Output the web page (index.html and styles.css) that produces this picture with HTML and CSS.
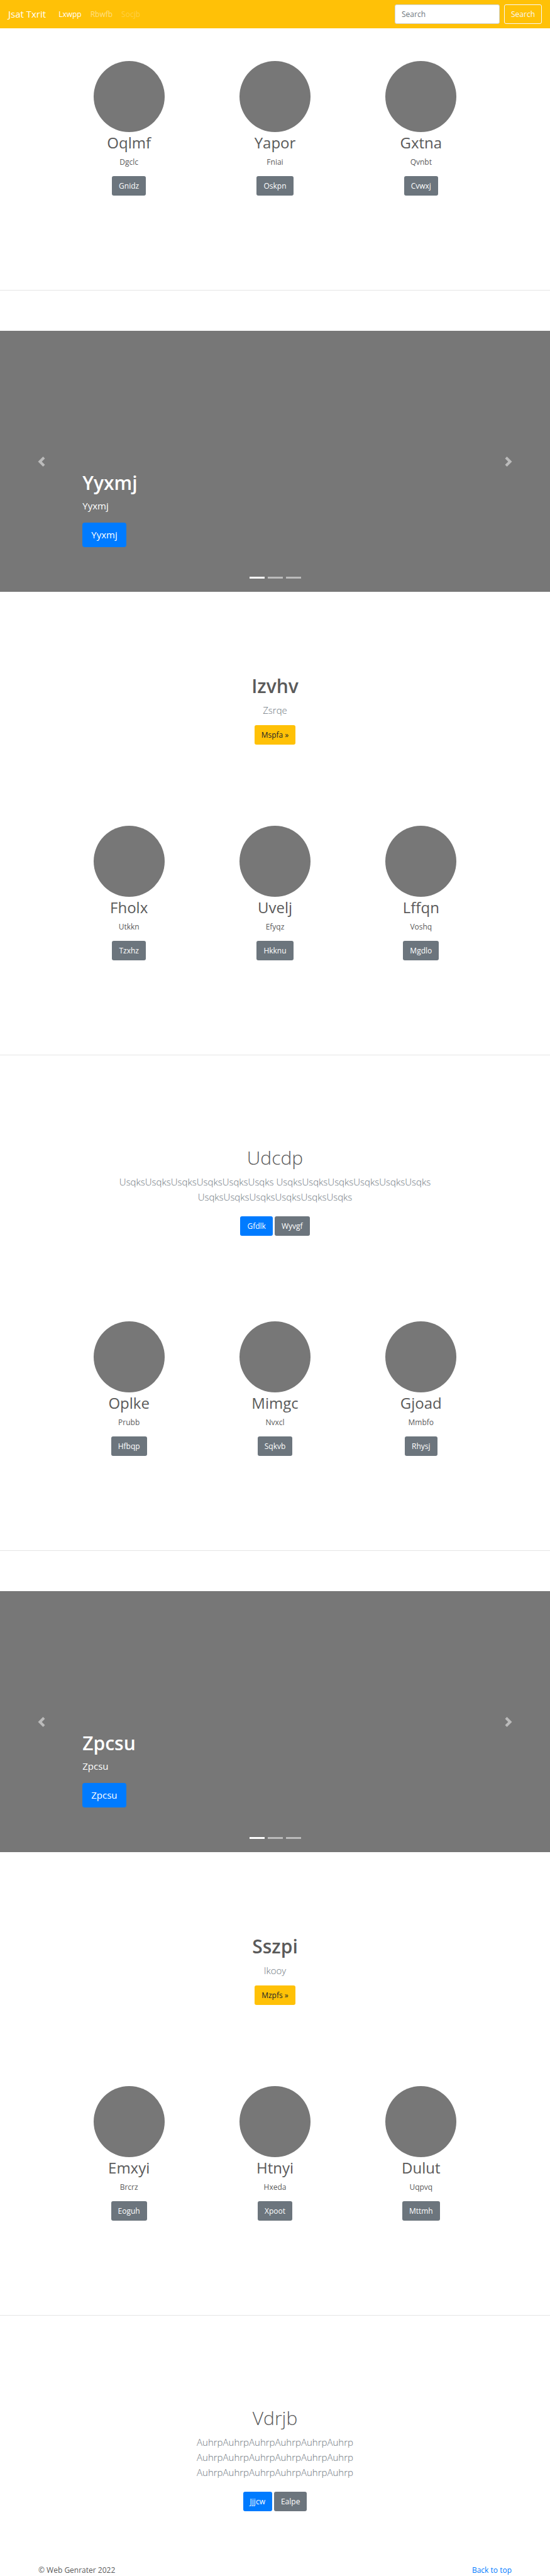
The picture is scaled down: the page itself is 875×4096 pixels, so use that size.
FILE: index.html
```html
<!DOCTYPE html>
<html lang="en">
<head>
<meta charset="utf-8">
<meta name="viewport" content="width=device-width, initial-scale=1">
<title>Jsat Txrit</title>
<link rel="stylesheet" href="styles.css">
</head>
<body id="top">
<header class="navbar">
  <a class="brand" href="#">Jsat Txrit</a>
  <nav class="nav-links">
    <a class="nav-link active" href="#">Lxwpp</a>
    <a class="nav-link" href="#">Rbwfb</a>
    <a class="nav-link disabled" href="#">Socjb</a>
  </nav>
  <form class="search">
    <input class="search-input" type="search" placeholder="Search" aria-label="Search">
    <button class="btn btn-outline" type="button">Search</button>
  </form>
</header>
<main>
  <section class="features">
    <article class="feature"><div class="avatar"></div><h2>Oqlmf</h2><p>Dgclc</p><a class="btn btn-secondary" href="#">Gnidz</a></article>
    <article class="feature"><div class="avatar"></div><h2>Yapor</h2><p>Fniai</p><a class="btn btn-secondary" href="#">Oskpn</a></article>
    <article class="feature"><div class="avatar"></div><h2>Gxtna</h2><p>Qvnbt</p><a class="btn btn-secondary" href="#">Cvwxj</a></article>
  </section>
  <hr class="divider">

  <section class="carousel">
    <button class="arrow arrow-prev" type="button" aria-label="Previous"><svg viewBox="0 0 8 8"><path d="M5.25 0l-4 4 4 4 1.5-1.5L4.25 4l2.5-2.5L5.25 0z"/></svg></button>
    <div class="caption">
      <h1>Yyxmj</h1>
      <p>Yyxmj</p>
      <a class="btn btn-primary btn-large" href="#">Yyxmj</a>
    </div>
    <button class="arrow arrow-next" type="button" aria-label="Next"><svg viewBox="0 0 8 8"><path d="M2.75 0l-1.5 1.5L3.75 4l-2.5 2.5L2.75 8l4-4-4-4z"/></svg></button>
    <div class="indicators"><span class="dash current"></span><span class="dash"></span><span class="dash"></span></div>
  </section>

  <section class="banner">
    <h1>Izvhv</h1>
    <p>Zsrqe</p>
    <a class="btn btn-warning" href="#">Mspfa »</a>
  </section>

  <section class="features">
    <article class="feature"><div class="avatar"></div><h2>Fholx</h2><p>Utkkn</p><a class="btn btn-secondary" href="#">Tzxhz</a></article>
    <article class="feature"><div class="avatar"></div><h2>Uvelj</h2><p>Efyqz</p><a class="btn btn-secondary" href="#">Hkknu</a></article>
    <article class="feature"><div class="avatar"></div><h2>Lffqn</h2><p>Voshq</p><a class="btn btn-secondary" href="#">Mgdlo</a></article>
  </section>
  <hr class="divider">

  <section class="album">
    <h1>Udcdp</h1>
    <p>UsqksUsqksUsqksUsqksUsqksUsqks UsqksUsqksUsqksUsqksUsqksUsqks UsqksUsqksUsqksUsqksUsqksUsqks</p>
    <div class="actions"><a class="btn btn-primary" href="#">Gfdlk</a><a class="btn btn-secondary" href="#">Wyvgf</a></div>
  </section>

  <section class="features features-after-album">
    <article class="feature"><div class="avatar"></div><h2>Oplke</h2><p>Prubb</p><a class="btn btn-secondary" href="#">Hfbqp</a></article>
    <article class="feature"><div class="avatar"></div><h2>Mimgc</h2><p>Nvxcl</p><a class="btn btn-secondary" href="#">Sqkvb</a></article>
    <article class="feature"><div class="avatar"></div><h2>Gjoad</h2><p>Mmbfo</p><a class="btn btn-secondary" href="#">Rhysj</a></article>
  </section>
  <hr class="divider">

  <section class="carousel">
    <button class="arrow arrow-prev" type="button" aria-label="Previous"><svg viewBox="0 0 8 8"><path d="M5.25 0l-4 4 4 4 1.5-1.5L4.25 4l2.5-2.5L5.25 0z"/></svg></button>
    <div class="caption">
      <h1>Zpcsu</h1>
      <p>Zpcsu</p>
      <a class="btn btn-primary btn-large" href="#">Zpcsu</a>
    </div>
    <button class="arrow arrow-next" type="button" aria-label="Next"><svg viewBox="0 0 8 8"><path d="M2.75 0l-1.5 1.5L3.75 4l-2.5 2.5L2.75 8l4-4-4-4z"/></svg></button>
    <div class="indicators"><span class="dash current"></span><span class="dash"></span><span class="dash"></span></div>
  </section>

  <section class="banner">
    <h1>Sszpi</h1>
    <p>Ikooy</p>
    <a class="btn btn-warning" href="#">Mzpfs »</a>
  </section>

  <section class="features">
    <article class="feature"><div class="avatar"></div><h2>Emxyi</h2><p>Brcrz</p><a class="btn btn-secondary" href="#">Eoguh</a></article>
    <article class="feature"><div class="avatar"></div><h2>Htnyi</h2><p>Hxeda</p><a class="btn btn-secondary" href="#">Xpoot</a></article>
    <article class="feature"><div class="avatar"></div><h2>Dulut</h2><p>Uqpvq</p><a class="btn btn-secondary" href="#">Mttmh</a></article>
  </section>
  <hr class="divider">

  <section class="album">
    <h1>Vdrjb</h1>
    <p>AuhrpAuhrpAuhrpAuhrpAuhrpAuhrp AuhrpAuhrpAuhrpAuhrpAuhrpAuhrp AuhrpAuhrpAuhrpAuhrpAuhrpAuhrp</p>
    <div class="actions"><a class="btn btn-primary" href="#">Jjjcw</a><a class="btn btn-secondary" href="#">Ealpe</a></div>
  </section>
</main>
<footer class="footer">
  <p>© Web Genrater 2022</p>
  <a href="#top">Back to top</a>
</footer>
</body>
</html>
```
FILE: styles.css
```css
* {
  box-sizing: border-box;
}

body {
  margin: 0;
  background: #fff;
  color: #5a5a5a;
  font-family: "Open Sans", "Noto Sans", sans-serif;
  font-size: 12px;
  line-height: 19px;
}

h1,
h2,
p {
  margin: 0;
}

a {
  color: #007bff;
  text-decoration: none;
}

/* Buttons */
.btn {
  display: inline-flex;
  align-items: center;
  justify-content: center;
  height: 31px;
  padding: 0 10px;
  border: 1px solid transparent;
  border-radius: 3px;
  color: #fff;
  font: inherit;
}

.btn-primary {
  background: #007bff;
}

.btn-secondary {
  background: #6c757d;
}

.btn-warning {
  background: #ffc107;
  color: #212529;
}

.btn-outline {
  border-color: #f8f9fa;
  background: transparent;
  color: #f8f9fa;
}

.btn-large {
  height: 39px;
  padding: 0 13px;
  border-radius: 4px;
  font-size: 15px;
}

/* Top bar */
.navbar {
  display: flex;
  align-items: center;
  padding: 7px 13px;
  background: #ffc107;
}

.brand {
  color: #fff;
  font-size: 15px;
}

.nav-links {
  display: flex;
  flex: 1;
  gap: 14px;
  margin-left: 20px;
}

.nav-link {
  color: rgba(255, 255, 255, 0.5);
}

.nav-link.active {
  color: #fff;
}

.nav-link.disabled {
  color: rgba(255, 255, 255, 0.25);
}

.search {
  display: flex;
  gap: 7px;
}

.search-input {
  width: 167px;
  height: 31px;
  padding: 0 10px;
  border: 1px solid #ced4da;
  border-radius: 3px;
  background: #fff;
  color: #495057;
  font: inherit;
}

.search-input::placeholder {
  color: #6c757d;
  opacity: 1;
}

/* Three-column features */
.features {
  display: grid;
  grid-template-columns: repeat(3, 1fr);
  padding: 0 89px 150px;
}

.navbar + main .features:first-child {
  padding-top: 52px;
}

.features-after-album {
  padding-top: 7px;
}

.feature {
  display: flex;
  flex-direction: column;
  align-items: center;
}

.avatar {
  width: 113px;
  height: 113px;
  border-radius: 50%;
  background: #777;
}

.feature h2 {
  margin-bottom: 5px;
  font-size: 24px;
  font-weight: 400;
  line-height: 33px;
}

.feature p {
  margin-bottom: 13px;
}

.divider {
  height: 1px;
  margin: 0;
  border: 0;
  background: rgba(0, 0, 0, 0.1);
}

/* Carousel */
.carousel {
  position: relative;
  display: grid;
  grid-template-columns: 15% 1fr 15%;
  height: 415px;
  margin-top: 64px;
  background: #777;
  color: #fff;
}

.arrow {
  display: flex;
  align-items: center;
  justify-content: center;
  padding: 0;
  border: 0;
  background: none;
  opacity: 0.5;
}

.arrow svg {
  width: 16px;
  height: 16px;
  fill: #fff;
}

.caption {
  align-self: end;
  padding-bottom: 71px;
}

.caption h1 {
  margin-bottom: 5px;
  font-size: 30px;
  font-weight: 600;
  line-height: 39px;
}

.caption p {
  margin-bottom: 15px;
  font-size: 15px;
  line-height: 24px;
}

.caption .btn {
  display: flex;
  width: fit-content;
}

.indicators {
  position: absolute;
  right: 0;
  bottom: 21px;
  left: 0;
  display: flex;
  justify-content: center;
  gap: 5px;
}

.dash {
  width: 24px;
  height: 3px;
  background: #fff;
  opacity: 0.5;
}

.dash.current {
  opacity: 1;
}

/* Centered text blocks */
.banner,
.album {
  display: flex;
  flex-direction: column;
  align-items: center;
  padding: 129px 13px;
  text-align: center;
}

.album {
  padding-top: 142px;
}

.banner h1,
.album h1 {
  margin-bottom: 6px;
  font-size: 30px;
  font-weight: 600;
  line-height: 41px;
}

.album h1 {
  font-weight: 300;
}

.banner p,
.album p {
  max-width: 500px;
  margin-bottom: 12px;
  color: #6c757d;
  font-size: 15px;
  font-weight: 300;
  line-height: 24px;
}

.album p {
  margin-bottom: 19px;
}

.actions {
  display: flex;
  gap: 3px;
}

main .album:last-child {
  padding-bottom: 84px;
}

/* Footer */
.footer {
  display: flex;
  justify-content: space-between;
  padding: 0 61px;
}
```
